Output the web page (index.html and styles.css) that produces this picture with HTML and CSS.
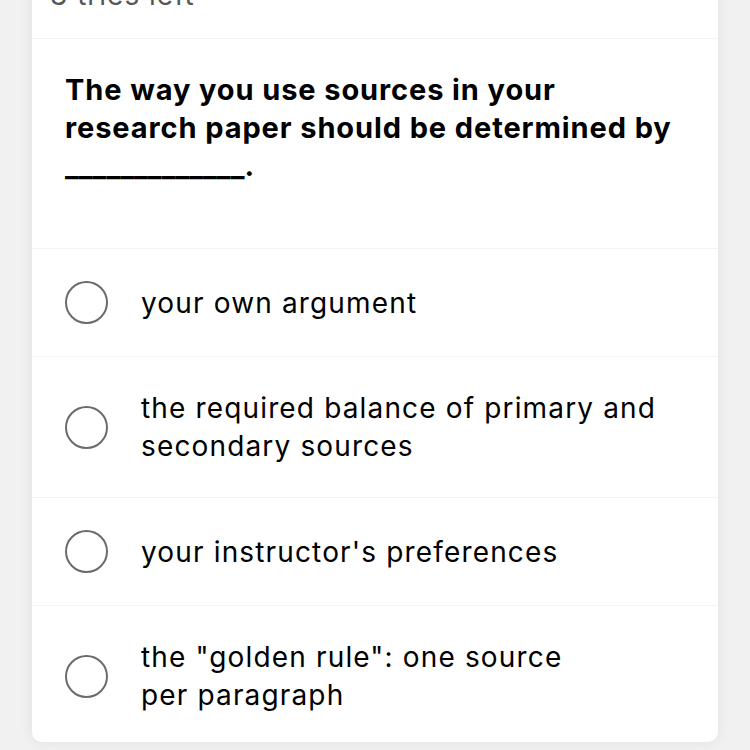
FILE: index.html
```html
<!DOCTYPE html>
<html lang="en">
<head>
<meta charset="utf-8">
<title>Question</title>
<link rel="stylesheet" href="styles.css">
</head>
<body>
<div class="card">
  <div class="header"><span class="tries">3 tries left</span></div>
  <div class="question">The way you use sources in your research paper should be determined by <span class="blank">_____________.</span></div>
  <ul class="options">
    <li class="option"><span class="radio"></span><span class="label">your own argument</span></li>
    <li class="option"><span class="radio"></span><span class="label">the required balance of primary and secondary sources</span></li>
    <li class="option"><span class="radio"></span><span class="label">your instructor's preferences</span></li>
    <li class="option"><span class="radio"></span><span class="label">the "golden rule": one source<br>per paragraph</span></li>
  </ul>
</div>
</body>
</html>
```
FILE: styles.css
```css
html, body {
  margin: 0;
  padding: 0;
}
body {
  background: #f1f1f1;
  font-family: Inter, "Noto Sans", "Liberation Sans", sans-serif;
  color: #000;
  overflow: hidden;
  height: 750px;
}
.card {
  margin: -40px 32px 0 32px;
  background: #fff;
  border-radius: 0 0 10px 10px;
  box-shadow: 0 0 14px rgba(0, 0, 0, 0.07);
}
.header {
  padding: 18px 18px 26px 18px;
  border-bottom: 1px solid #f3f3f3;
}
.tries {
  display: block;
  font-size: 28px;
  line-height: 34px;
  letter-spacing: 1px;
  color: #555;
}
.question {
  padding: 32px 33px 63px 33px;
  font-size: 29px;
  line-height: 38px;
  font-weight: 700;
  letter-spacing: 0.9px;
  border-bottom: 1px solid #f3f3f3;
}
.blank {
  display: block;
  letter-spacing: 0;
}
.options {
  list-style: none;
  margin: 0;
  padding: 0;
}
.option {
  display: flex;
  align-items: center;
  gap: 33px;
  padding: 32px 33px;
  border-bottom: 1px solid #f3f3f3;
  font-size: 28px;
  line-height: 38px;
  letter-spacing: 1.15px;
}
.option:last-child {
  border-bottom: none;
  padding-bottom: 28px;
}
.radio {
  flex: none;
  width: 39px;
  height: 39px;
  border: 2px solid #6b6b6b;
  border-radius: 50%;
}
.label {
  flex: 1;
}
```
